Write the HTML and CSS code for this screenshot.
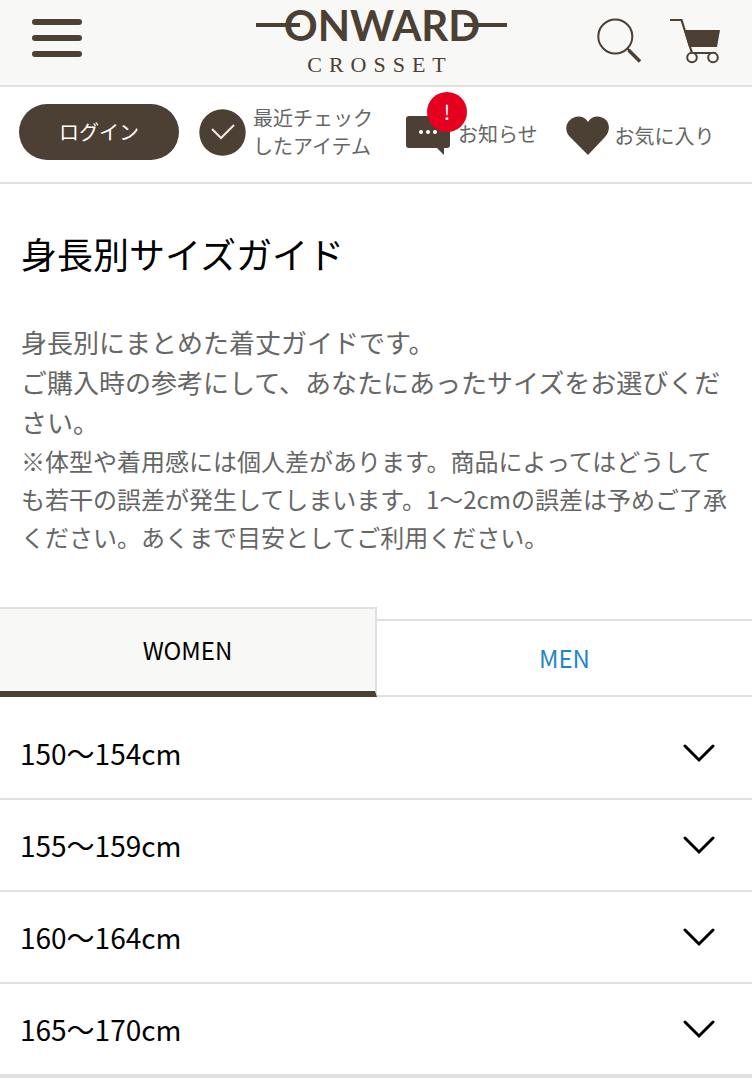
FILE: index.html
```
<!DOCTYPE html>
<html lang="ja">

<head>
    <meta charset="UTF-8" />
    <meta name="viewport" content="width=device-width, initial-scale=1.0" />
    <title>身長別サイズガイド</title>
    <link rel="stylesheet" href="styles.css">
</head>

<body>
    <header class="header">
        <button type="button" class="icon-button menu-button" aria-label="メニュー">
            <svg width="50" height="76" viewBox="0 0 50 76" fill="#4c3f34">
                <rect x="0" y="19" width="50" height="6" rx="3" />
                <rect x="0" y="35" width="50" height="6" rx="3" />
                <rect x="0" y="51" width="50" height="6" rx="3" />
            </svg>
        </button>
        <a href="#" class="logo">
            <svg width="256" height="80" viewBox="-4 0 256 80" fill="#4c3f34">
                <text class="logo-name" x="126" y="41" text-anchor="middle">ONWARD</text>
                <path d="M0 23h44v4H0zM208 23h43v4h-43z" />
                <text class="logo-sub" x="124" y="72" text-anchor="middle">CROSSET</text>
            </svg>
        </a>
        <div class="header-icons">
            <button type="button" class="icon-button" aria-label="検索">
                <svg width="46" height="76" viewBox="596 0 46 76" fill="none" stroke="#4c3f34">
                    <circle cx="615.300" cy="36.500" r="17" stroke-width="2" />
                    <path d="M627 48l3 3" stroke-width="2" />
                    <path d="M628.500 50l11.500 11.500" stroke-width="3.500" />
                </svg>
            </button>
            <a href="#" class="icon-button" aria-label="カート">
                <svg width="58" height="76" viewBox="670 0 58 76" fill="none" stroke="#4c3f34">
                    <path d="M670 20h11.500L692 53h24" stroke-width="2.200" />
                    <path d="M684 30h36l-3 17h-28z" fill="#4c3f34" stroke="none" />
                    <circle cx="692" cy="57.500" r="4.800" stroke-width="2" fill="#f8f8f6" />
                    <circle cx="713" cy="57.500" r="4.800" stroke-width="2" fill="#f8f8f6" />
                </svg>
            </a>
        </div>
    </header>

    <nav class="user-nav">
        <a href="#" class="login">ログイン</a>
        <a href="#" class="nav-item nav-recent">
            <svg width="47" height="47" viewBox="0 0 47 47">
                <circle cx="23.500" cy="23.500" r="23.200" fill="#4c3f34" />
                <path d="M13 20l9 9 13-13" fill="none" stroke="#eeebe8" stroke-width="2" />
            </svg>
            <span>最近チェック<br>したアイテム</span>
        </a>
        <a href="#" class="nav-item nav-news">
            <span class="news-icon">
                <svg width="46" height="44" viewBox="0 -4 46 44">
                    <path d="M3 0h38q3 0 3 3v26q0 3-3 3h-3v7l-7-7H3q-3 0-3-3V3q0-3 3-3z" fill="#4c3f34" />
                    <circle cx="15" cy="16" r="2" fill="#fff" />
                    <circle cx="22" cy="16" r="2" fill="#fff" />
                    <circle cx="29" cy="16" r="2" fill="#fff" />
                </svg>
                <span class="badge">!</span>
            </span>
            <span>お知らせ</span>
        </a>
        <a href="#" class="nav-item nav-favorite">
            <svg width="44" height="40" viewBox="0 0 44 40">
                <path d="M22 39L4 21C-1 16-1 8 4 4C9-1 18-1 22 6C26-1 35-1 40 4C44 8 44 16 39 21z" fill="#4c3f34" />
            </svg>
            <span>お気に入り</span>
        </a>
    </nav>

    <main>
        <div class="intro">
            <h1>身長別サイズガイド</h1>
            <p class="lead">身長別にまとめた着丈ガイドです。<br>ご購入時の参考にして、あなたにあったサイズをお選びください。</p>
            <p class="note">※体型や着用感には個人差があります。商品によってはどうしても若干の誤差が発生してしまいます。1〜2cmの誤差は予めご了承ください。あくまで目安としてご利用ください。</p>
        </div>

        <div class="tabs">
            <a href="#women" class="tab active">WOMEN</a>
            <a href="#men" class="tab">MEN</a>
        </div>

        <ul id="women" class="size-list">
            <li>
                <button type="button" class="size-button">150〜154cm
                    <svg class="chevron" width="32" height="20" viewBox="0 0 32 20"><path d="M2 3l14 14L30 3" /></svg>
                </button>
            </li>
            <li>
                <button type="button" class="size-button">155〜159cm
                    <svg class="chevron" width="32" height="20" viewBox="0 0 32 20"><path d="M2 3l14 14L30 3" /></svg>
                </button>
            </li>
            <li>
                <button type="button" class="size-button">160〜164cm
                    <svg class="chevron" width="32" height="20" viewBox="0 0 32 20"><path d="M2 3l14 14L30 3" /></svg>
                </button>
            </li>
            <li>
                <button type="button" class="size-button">165〜170cm
                    <svg class="chevron" width="32" height="20" viewBox="0 0 32 20"><path d="M2 3l14 14L30 3" /></svg>
                </button>
            </li>
        </ul>
    </main>
</body>

</html>
```
FILE: styles.css
```
* {
    box-sizing: border-box;
    margin: 0;
    padding: 0;
}

body {
    font-family: "Noto Sans CJK JP", sans-serif;
    background-color: #fff;
    color: #000;
}

a {
    color: inherit;
    text-decoration: none;
}

svg {
    display: block;
    flex-shrink: 0;
}

button {
    font: inherit;
    color: inherit;
    background: none;
    border: none;
    cursor: pointer;
}

.header {
    display: grid;
    grid-template-columns: 1fr auto 1fr;
    align-items: start;
    height: 87px;
    padding: 0 24px 0 32px;
    background-color: #f8f8f6;
    border-bottom: 2px solid #e0e0e0;
}

.menu-button {
    justify-self: start;
}

.header-icons {
    display: flex;
    justify-content: flex-end;
    gap: 28px;
}

.logo-name {
    font-family: Lato, sans-serif;
    font-size: 42px;
    font-weight: bold;
}

.logo-sub {
    font-family: "Liberation Serif", serif;
    font-size: 22px;
    letter-spacing: 7px;
}

.user-nav {
    display: flex;
    align-items: center;
    padding: 17px 19px 22px;
    border-bottom: 2px solid #e0e0e0;
    font-size: 20px;
    line-height: 28px;
    color: #666;
}

.login {
    width: 160px;
    padding: 14px 0;
    border-radius: 28px;
    background-color: #4c3f34;
    color: #fff;
    text-align: center;
}

.nav-item {
    display: flex;
    align-items: center;
    white-space: nowrap;
}

.nav-recent {
    gap: 7px;
    margin-left: 20px;
}

.nav-news {
    gap: 6px;
    margin-left: 33px;
    padding-top: 4px;
}

.nav-favorite {
    gap: 5px;
    margin-left: 28px;
    padding-top: 8px;
}

.news-icon {
    position: relative;
}

.badge {
    position: absolute;
    top: -20px;
    left: 21px;
    width: 40px;
    height: 40px;
    border-radius: 50%;
    background-color: #e6001f;
    color: #fff;
    line-height: 40px;
    text-align: center;
}

.intro {
    padding: 42px 19px 51px 21px;
}

.intro h1 {
    margin-bottom: 42px;
    font-size: 36px;
    font-weight: normal;
    line-height: 54px;
}

.intro p {
    color: #666;
}

.lead {
    font-size: 26px;
    line-height: 40px;
}

.intro .note {
    font-size: 24px;
    line-height: 38px;
}

.tabs {
    display: flex;
    align-items: flex-end;
    font-size: 24px;
    line-height: 36px;
    text-align: center;
}

.tab {
    flex: 1;
    padding: 19px 0;
    border-top: 2px solid #e0e0e0;
    border-bottom: 2px solid #e0e0e0;
    color: #1d87c4;
}

.tab.active {
    padding: 23px 0;
    border-right: 2px solid #e0e0e0;
    border-bottom: 6px solid #4c3f34;
    background-color: #f8f8f6;
    color: #000;
}

.size-list {
    margin-top: 11px;
    border-bottom: 2px solid #e0e0e0;
    list-style: none;
}

.size-list li {
    border-bottom: 2px solid #e0e0e0;
}

.size-button {
    display: flex;
    align-items: center;
    justify-content: space-between;
    width: 100%;
    padding: 24px 37px 24px 20px;
    font-size: 28px;
    line-height: 42px;
}

.chevron {
    fill: none;
    stroke: #000;
    stroke-width: 3;
    stroke-linecap: round;
}
```
